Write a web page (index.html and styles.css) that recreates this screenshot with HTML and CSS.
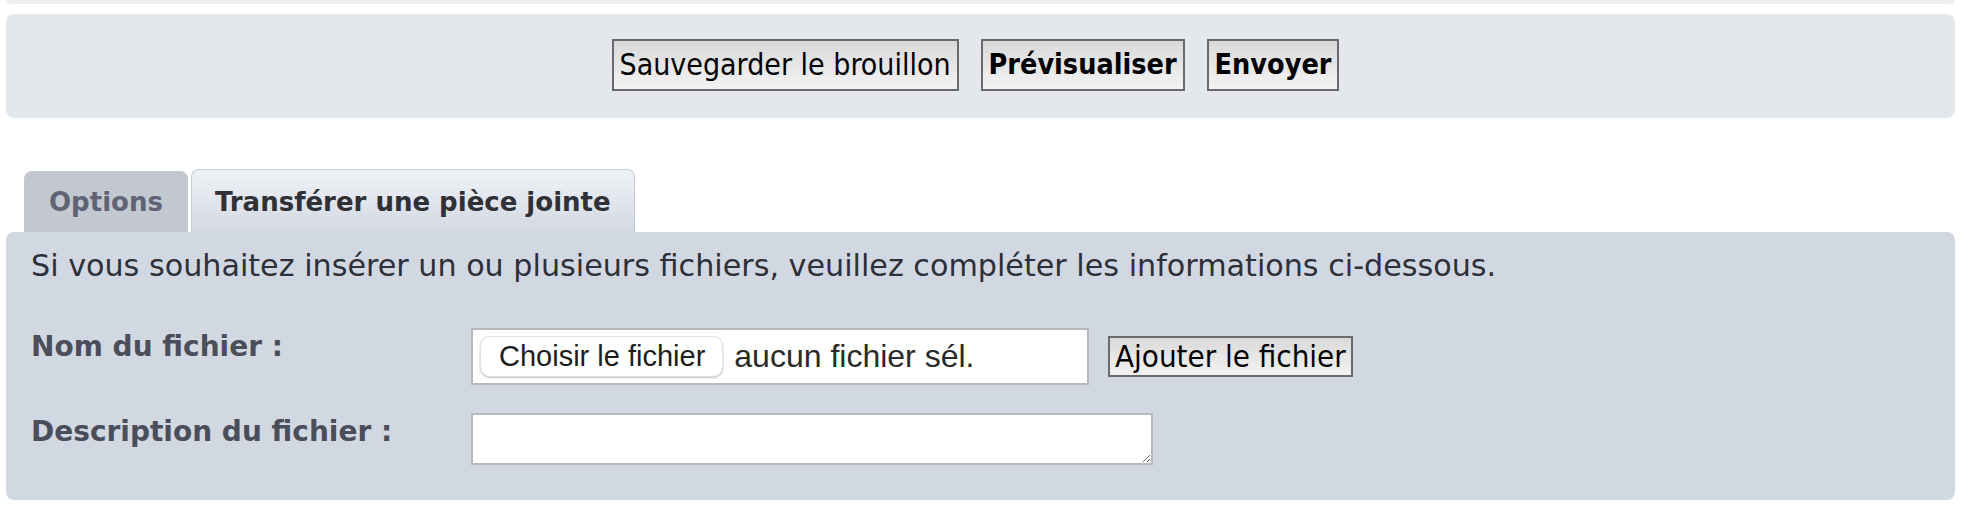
FILE: index.html
```html
<!DOCTYPE html>
<html lang="fr">
<head>
<meta charset="utf-8">
<title>Pièce jointe</title>
<link rel="stylesheet" href="styles.css">
</head>
<body>
<div class="page">
  <div class="stub"></div>
  <div class="panel-submit">
    <button class="btn">Sauvegarder le brouillon</button>
    <button class="btn btn-bold">Prévisualiser</button>
    <button class="btn btn-bold">Envoyer</button>
  </div>

  <ul class="tabs">
    <li class="tab">Options</li>
    <li class="tab tab-active">Transférer une pièce jointe</li>
  </ul>
  <div class="panel-attach">
    <p class="intro">Si vous souhaitez insérer un ou plusieurs fichiers, veuillez compléter les informations ci-dessous.</p>
    <dl class="row row-file">
      <dt class="label">Nom du fichier :</dt>
      <dd class="field">
        <div class="file-box">
          <span class="choose">Choisir le fichier</span>
          <span class="nofile">aucun fichier sél.</span>
        </div>
        <button class="btn btn-add">Ajouter le fichier</button>
      </dd>
    </dl>
    <dl class="row row-desc">
      <dt class="label">Description du fichier :</dt>
      <dd class="field">
        <textarea class="desc"></textarea>
      </dd>
    </dl>
  </div>
</div>
</body>
</html>
```

FILE: styles.css
```css
* { box-sizing: border-box; }
html, body { margin: 0; padding: 0; background: #ffffff; }
body { font-family: "DejaVu Sans", Verdana, sans-serif; color: #2d3038; }

.page { padding: 0 13px 0 6px; }

.stub {
  height: 4px;
  background: #eceef2;
  border-radius: 0 0 8px 8px;
}

.panel-submit {
  margin-top: 10px;
  height: 104px;
  background: #e4e8ed;
  border-radius: 8px;
  display: flex;
  justify-content: center;
  align-items: flex-start;
  gap: 22px;
  padding-top: 25px;
  padding-right: 10px;
}

.btn {
  height: 52px;
  padding: 0 6px;
  border: 2px solid #6a6a6a;
  border-radius: 0;
  background: linear-gradient(#d9d9d9, #f3f3f3);
  font-family: "Liberation Sans Narrow", "DejaVu Sans Condensed", "Liberation Sans", sans-serif;
  font-size: 30px;
  color: #000;
  line-height: 1;
}
.btn-bold { font-weight: bold; font-size: 28.5px; }

.tabs {
  list-style: none;
  margin: 51px 0 0 0;
  padding: 0 0 0 18px;
  display: flex;
  align-items: flex-end;
  gap: 3px;
}
.tab {
  height: 61px;
  padding: 0 25px;
  background: #c3c8d0;
  border-radius: 8px 8px 0 0;
  font-size: 26px;
  font-weight: bold;
  color: #5e6474;
  display: flex;
  align-items: center;
}
.tab-active {
  height: 64px;
  margin-bottom: -1px;
  background: linear-gradient(#f0f2f6, #d2d8e2);
  border: 1px solid #c6ccd6;
  border-bottom: none;
  color: #2f3137;
  padding: 0 23px;
}

.panel-attach {
  height: 268px;
  background: #d2d8e2;
  border-radius: 8px;
  padding: 16px 25px 0 25px;
}
.panel-attach .intro {
  margin: 0;
  font-size: 30.2px;
  line-height: 36px;
  color: #2d3038;
}

.row {
  display: flex;
  align-items: flex-start;
  margin: 0;
}
.row-file { margin-top: 44px; }
.row-desc { margin-top: 28px; }
.label {
  width: 440px;
  font-size: 28px;
  line-height: 34px;
  font-weight: bold;
  color: #4a4e5a;
}
.row-file .label { margin-top: 2px; }
.row-desc .label { margin-top: 2px; }
.field {
  margin: 0;
  display: flex;
  align-items: center;
  gap: 19px;
}

.file-box {
  width: 618px;
  height: 57px;
  background: #fff;
  border: 2px solid #b4b8bf;
  display: flex;
  align-items: center;
  padding-left: 7px;
}
.choose {
  height: 41px;
  padding: 0 17px 0 18px;
  display: flex;
  align-items: center;
  background: #fff;
  border: 1px solid #e0e0e0;
  border-radius: 10px;
  box-shadow: 0 1px 2px rgba(0,0,0,0.25);
  font-family: "Liberation Sans Narrow", "Liberation Sans", Arial, sans-serif;
  font-size: 29px;
  color: #1d1d1d;
}
.nofile {
  margin-left: 11px;
  font-family: "Liberation Sans", Arial, sans-serif;
  font-size: 32px;
  color: #2a2a2a;
}

.btn-add {
  height: 41px;
  font-weight: normal;
  font-size: 31px;
  padding: 0 5px;
}

.desc {
  width: 682px;
  height: 52px;
  border: 2px solid #b4b8bf;
  background: #fff;
  resize: both;
  margin: 0;
  display: block;
}
```
